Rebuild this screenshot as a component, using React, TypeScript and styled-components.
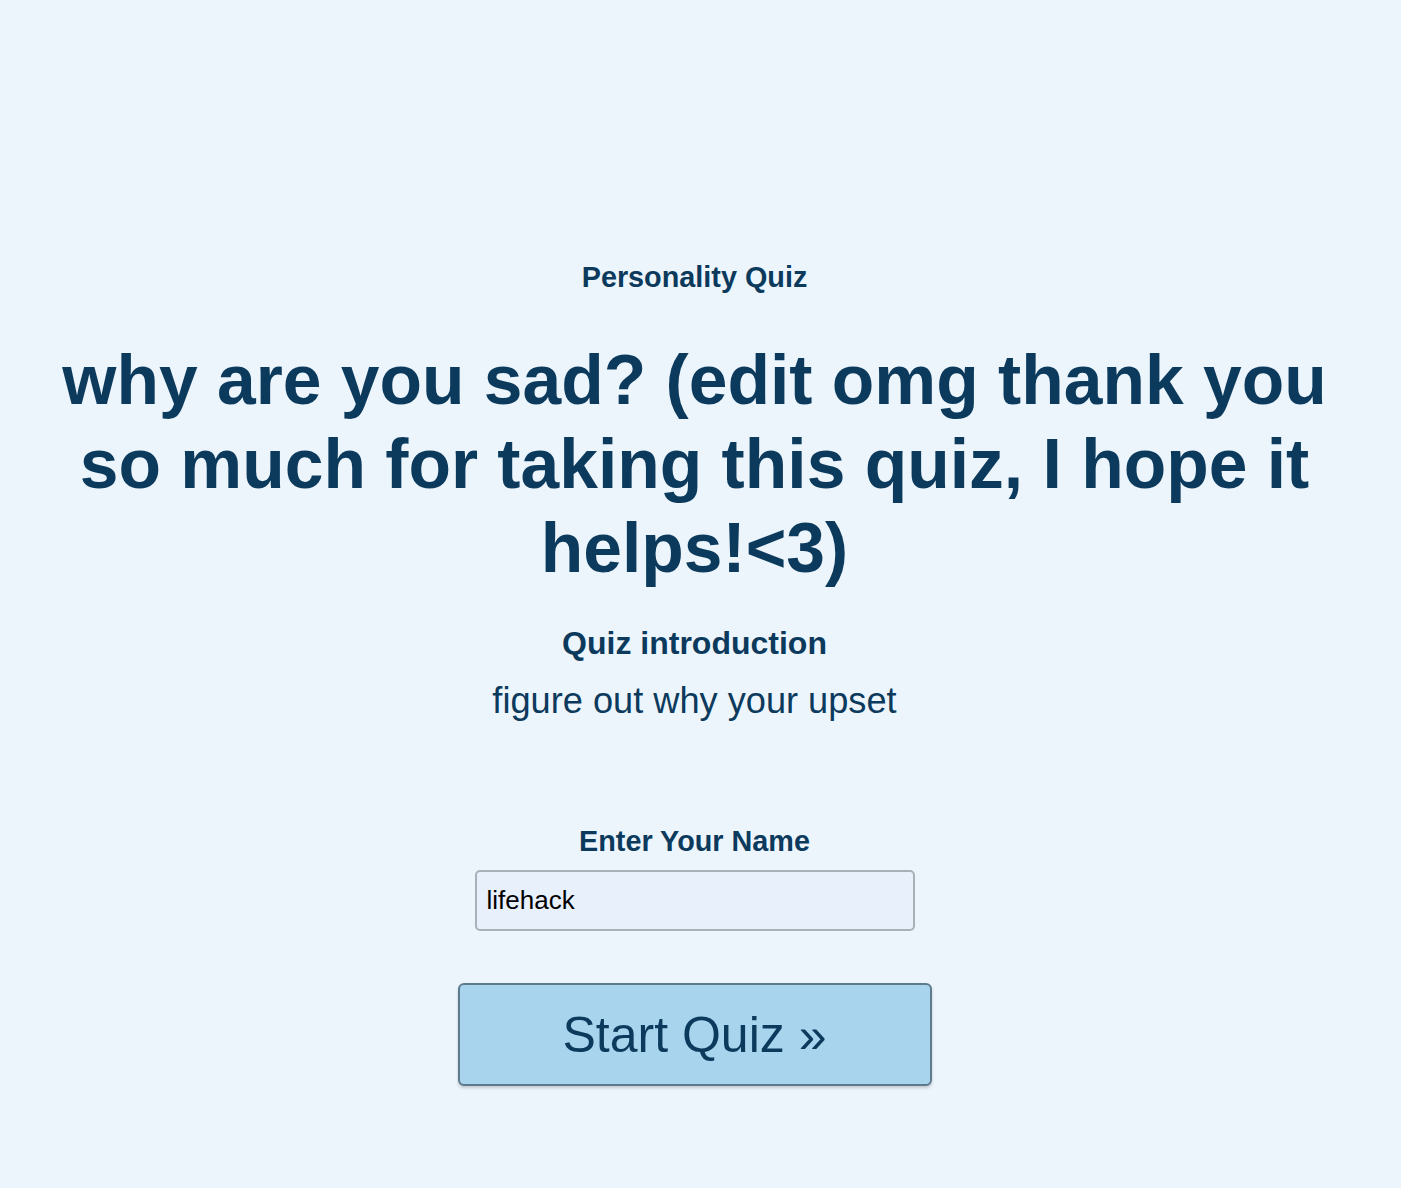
import React from "react";
import styled, { createGlobalStyle } from "styled-components";

const GlobalStyle = createGlobalStyle`
  html, body {
    margin: 0;
    padding: 0;
    background: #edf5fc;
  }
  body {
    font-family: "Liberation Sans", Arial, sans-serif;
    color: #0c3a5c;
  }
`;

const Page = styled.main`
  min-height: 1188px;
  box-sizing: border-box;
  padding: 261px 32px 0 20px;
  display: flex;
  flex-direction: column;
  align-items: center;
  text-align: center;
`;

const Kicker = styled.div`
  font-size: 28.8px;
  font-weight: 700;
  line-height: 32px;
`;

const Title = styled.h1`
  margin: 45px 0 0;
  font-size: 69.6px;
  font-weight: 700;
  line-height: 84px;
`;

const SectionHeading = styled.h2`
  margin: 35px 0 0;
  font-size: 32px;
  font-weight: 700;
  line-height: 36px;
`;

const Intro = styled.p`
  margin: 20px 0 0;
  font-size: 36.2px;
  font-weight: 400;
  line-height: 40px;
`;

const Form = styled.form`
  margin-top: 104px;
  display: flex;
  flex-direction: column;
  align-items: center;
`;

const Label = styled.label`
  font-size: 28.8px;
  font-weight: 700;
  line-height: 32px;
`;

const NameInput = styled.input`
  margin-top: 13px;
  width: 440px;
  height: 61px;
  box-sizing: border-box;
  padding: 0 10px;
  border: 2px solid #aab0b8;
  border-radius: 5px;
  background: #e8f0fc;
  font-family: "Liberation Sans", Arial, sans-serif;
  font-size: 26px;
  color: #000;
  outline: none;
`;

const StartButton = styled.button`
  margin-top: 52px;
  width: 474px;
  height: 103px;
  box-sizing: border-box;
  border: 2px solid #5e7a8d;
  border-radius: 6px;
  background: #a9d4ed;
  box-shadow: 0 2px 3px rgba(0, 0, 0, 0.18);
  font-family: "Liberation Sans", Arial, sans-serif;
  font-size: 50px;
  color: #0c3a5c;
  cursor: pointer;
`;

export default function App() {
  return (
    <>
      <GlobalStyle />
      <Page>
        <Kicker>Personality Quiz</Kicker>
        <Title>
          why are you sad? (edit omg thank you so much for taking this quiz, I hope it helps!&lt;3)
        </Title>
        <SectionHeading>Quiz introduction</SectionHeading>
        <Intro>figure out why your upset</Intro>
        <Form onSubmit={(e) => e.preventDefault()}>
          <Label htmlFor="name">Enter Your Name</Label>
          <NameInput id="name" type="text" defaultValue="lifehack" />
          <StartButton type="submit">Start Quiz »</StartButton>
        </Form>
      </Page>
    </>
  );
}
